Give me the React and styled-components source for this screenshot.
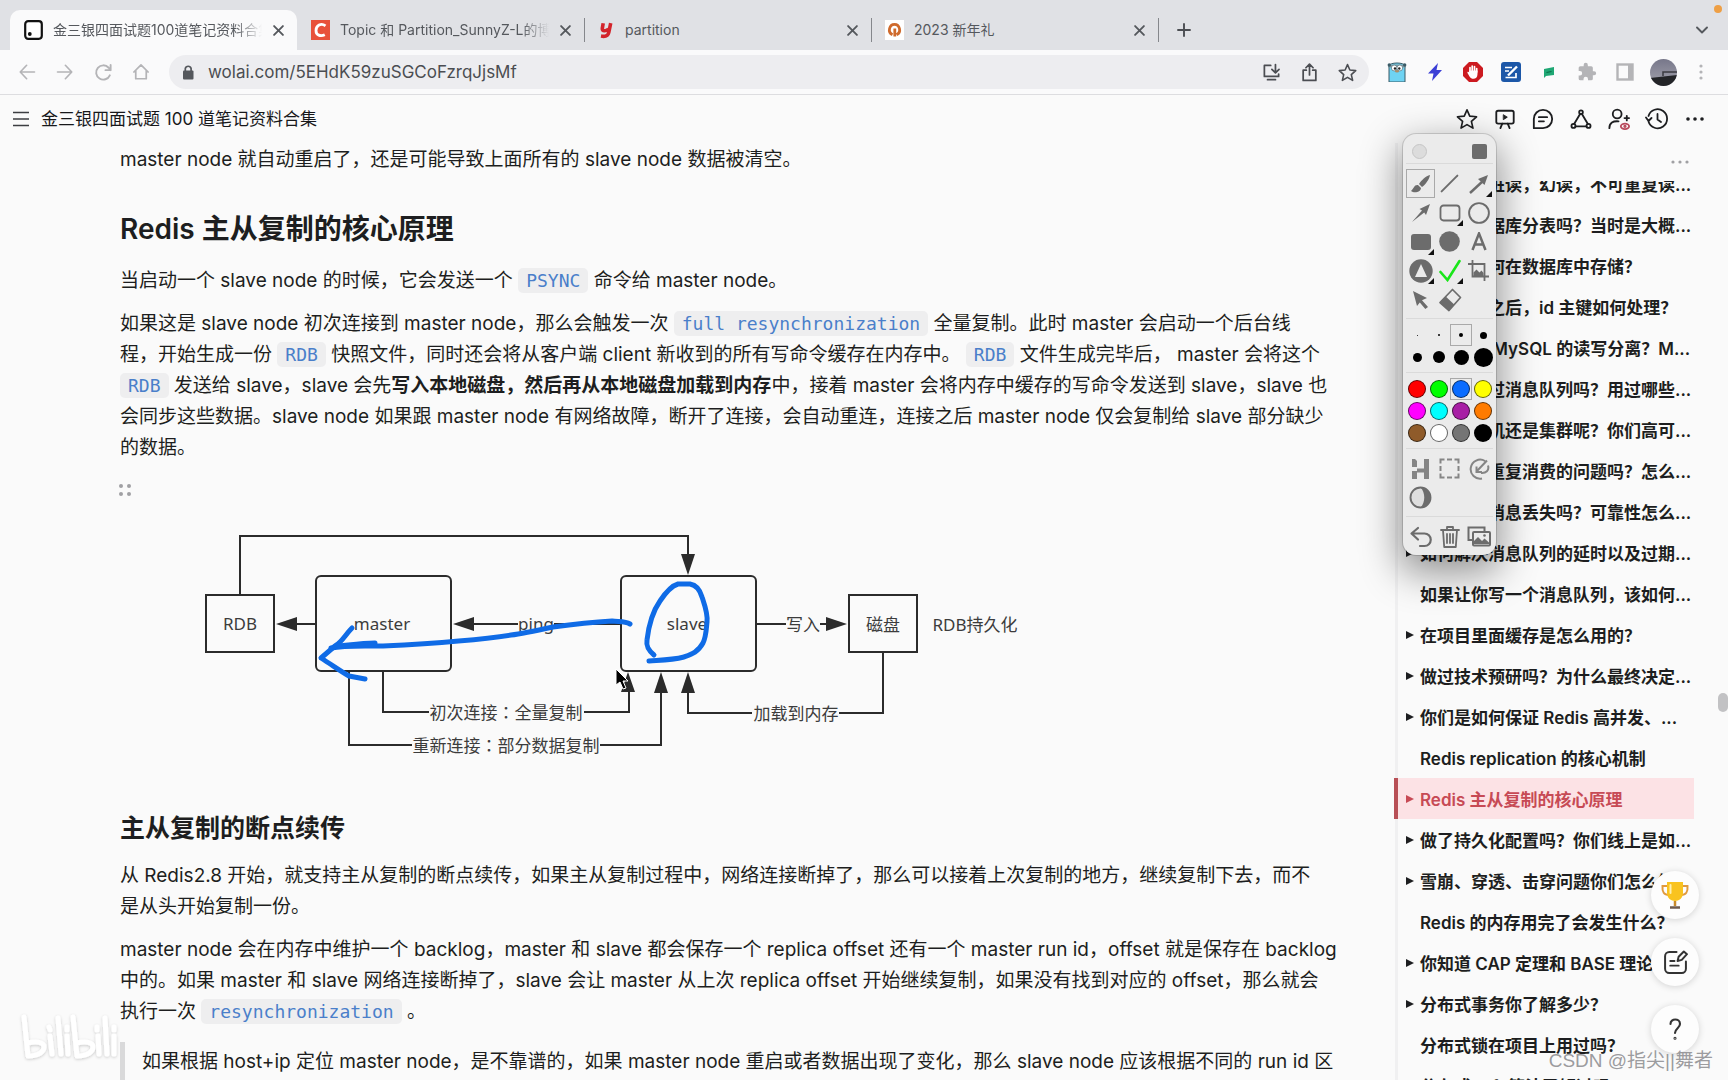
import React from "react";
import styled, { createGlobalStyle } from "styled-components";

const Global = createGlobalStyle`
  * { box-sizing: border-box; }
  body {
    margin: 0;
    background: #fafafa;
    color: #1d1e20;
    font-family: Inter, "Noto Sans CJK SC", sans-serif;
    overflow: hidden;
  }
  button, input { font: inherit; color: inherit; }
  svg { display: block; flex: none; }
`;

const Window = styled.div`
  display: flex;
  flex-direction: column;
  height: 100vh;
  overflow: hidden;
  position: relative;
`;

const PlainButton = styled.button`
  display: flex;
  align-items: center;
  justify-content: center;
  flex: none;
  padding: 0;
  border: 0;
  background: none;
`;

const IconButton = styled(PlainButton)`
  width: 38px;
  height: 32px;
  color: ${(p) => p.$color || "#4b4d52"};
`;

/* ---------- browser tabs ---------- */

const TabStrip = styled.header`
  display: flex;
  align-items: flex-end;
  flex: none;
  height: 50px;
  padding-left: 10px;
  background: #e0e1e5;
  position: relative;
`;

const Tab = styled.div`
  display: flex;
  align-items: center;
  width: 287px;
  height: 40px;
  padding: 0 9px 0 14px;
  gap: 10px;
  border-radius: 10px 10px 0 0;
  background: ${(p) => (p.$active ? "#fafafb" : "transparent")};
  color: #55585d;
  font-size: 14px;
`;

const TabDivider = styled.span`
  width: 1px;
  height: 24px;
  margin: 0 -1px 8px 0;
  background: #85878c;
`;

const TabTitle = styled.span`
  flex: 1;
  min-width: 0;
  overflow: hidden;
  white-space: nowrap;
  line-height: 20px;
  mask-image: ${(p) => (p.$fade ? "linear-gradient(90deg, #000 87%, transparent)" : "none")};
`;

const TabClose = styled(PlainButton)`
  width: 20px;
  height: 20px;
  margin-left: -4px;
`;

const NewTab = styled(PlainButton)`
  width: 52px;
  height: 40px;
  color: #4b4d52;
`;

const TabMenu = styled(PlainButton)`
  width: 32px;
  height: 40px;
  margin: 0 10px 0 auto;
  color: #55585d;
`;

const RecordingDot = styled.i`
  position: absolute;
  top: 5px;
  right: 6px;
  width: 8px;
  height: 8px;
  border-radius: 50%;
  background: #ee9f45;
`;

/* ---------- browser toolbar ---------- */

const Toolbar = styled.nav`
  display: flex;
  align-items: center;
  flex: none;
  height: 45px;
  padding: 0 8px;
  background: #fafafb;
  border-bottom: 1px solid #dddde0;
`;

const AddressBar = styled.label`
  display: flex;
  align-items: center;
  flex: 1;
  height: 34px;
  margin: 0 9px;
  padding: 0 3px 0 12px;
  border-radius: 17px;
  background: #ededf0;
  color: #55585d;
`;

const AddressInput = styled.input`
  flex: 1;
  min-width: 0;
  margin-left: 13px;
  padding: 0;
  border: 0;
  outline: 0;
  background: none;
  color: #4b4d52;
  font-size: 17px;
`;

/* ---------- page header ---------- */

const PageHeader = styled.div`
  display: flex;
  align-items: center;
  flex: none;
  height: 48px;
  padding: 0 14px 0 12px;
`;

const PageTitle = styled.h1`
  flex: 1;
  margin: 0 0 0 11px;
  font-size: 17px;
  line-height: 24px;
  font-weight: 400;
  color: #17181a;
`;

/* ---------- article ---------- */

const Body = styled.main`
  display: flex;
  flex: 1;
  min-height: 0;
`;

const Article = styled.article`
  flex: 1;
  min-width: 0;
  overflow: hidden;
  padding: 1px 0 0 120px;
  font-size: 19px;
  line-height: 31px;
  white-space: nowrap;
`;

const Paragraph = styled.p`
  margin: 0 0 12px;
`;

const Heading = styled.h2`
  margin: 34px 0 16px;
  font-size: 28px;
  line-height: 40px;
  font-weight: 600;
`;

const SubHeading = styled.h3`
  margin: 22px 0 14px;
  font-size: 25px;
  line-height: 36px;
  font-weight: 600;
`;

const Code = styled.code`
  padding: 2px 8px;
  border-radius: 5px;
  background: #eeeeef;
  color: #4a7fca;
  font-family: "DejaVu Sans Mono", monospace;
  font-size: 18px;
  line-height: 22px;
`;

const Quote = styled.blockquote`
  margin: 15px 0 0;
  padding: 4px 0 40px 17px;
  border-left: 5px solid #d9d9da;
`;

const Figure = styled.figure`
  margin: 19px 0 0;
`;

const DragHandle = styled(PlainButton)`
  width: 16px;
  height: 16px;
  margin-left: -3px;
  color: #a0a0a3;
`;

/* ---------- outline ---------- */

const Outline = styled.aside`
  display: flex;
  flex-direction: column;
  flex: none;
  width: 334px;
  padding-right: 34px;
`;

const OutlineTop = styled.div`
  display: flex;
  justify-content: flex-end;
  align-items: center;
  flex: none;
  height: 38px;
  padding-right: 4px;
  border-left: 3px solid #f0f0f1;
  margin-left: 1px;
`;

const OutlineList = styled.ul`
  flex: 1;
  min-height: 0;
  margin: 0;
  padding: 0;
  overflow: hidden;
  list-style: none;
  display: flex;
  flex-direction: column;
  &::before { content: ""; flex: none; margin-top: -18px; }
`;

const OutlineItem = styled.li`
  flex: none;
  height: 41px;
  padding-left: ${(p) => (p.$active ? 0 : 1)}px;
`;

const OutlineLink = styled.a`
  display: flex;
  align-items: center;
  height: 100%;
  padding-left: 8px;
  border-left: ${(p) => (p.$active ? "4px solid #b84f56" : "3px solid #f0f0f1")};
  background: ${(p) => (p.$active ? "#fce2e5" : "none")};
  color: ${(p) => (p.$active ? "#c74a55" : "#1d1e20")};
  font-size: 17px;
  font-weight: 600;
  white-space: nowrap;
  text-decoration: none;
`;

const Caret = styled.i`
  flex: none;
  width: 14px;
  height: 8px;
  &::before {
    content: "";
    display: ${(p) => (p.$open ? "block" : "none")};
    width: 0;
    border-left: 8px solid currentColor;
    border-top: 4px solid transparent;
    border-bottom: 4px solid transparent;
  }
`;

/* ---------- floating drawing palette ---------- */

const Palette = styled.section`
  position: absolute;
  top: 134px;
  right: 232px;
  width: 93px;
  border-radius: 13px;
  background: #ebebeb;
  box-shadow: 0 0 0 1px rgba(0, 0, 0, 0.14), 0 14px 38px 4px rgba(0, 0, 0, 0.42);
  padding: 0 3px;
  color: #6c6c6c;
`;

const PaletteHead = styled.div`
  display: flex;
  justify-content: space-between;
  align-items: center;
  height: 30px;
  padding: 5px 6px 0;
  border-bottom: 1px solid #dadada;
`;

const CloseDot = styled(PlainButton)`
  width: 15px;
  height: 15px;
  border: 1px solid #c6c6c6;
  border-radius: 50%;
  background: #dcdcdc;
`;

const CollapseSquare = styled(PlainButton)`
  width: 15px;
  height: 15px;
  border-radius: 2px;
  background: #6c6c6c;
`;

const PaletteGrid = styled.div`
  display: grid;
  grid-template-columns: repeat(${(p) => p.$cols}, ${(p) => (p.$cols === 3 ? 29 : 22)}px);
  grid-auto-rows: ${(p) => (p.$cols === 3 ? 29 : 22)}px;
  padding: 5px 0 4px;
  border-bottom: ${(p) => (p.$last ? "0" : "1px solid #dadada")};
`;

const Tool = styled(PlainButton)`
  position: relative;
  border: 1px solid ${(p) => (p.$on ? "#a9a9a9" : "transparent")};
  &::after {
    content: "";
    display: ${(p) => (p.$more ? "block" : "none")};
    position: absolute;
    right: 0;
    bottom: 0;
    border-bottom: 6px solid #111;
    border-left: 6px solid transparent;
  }
`;

const Dot = styled.i`
  flex: none;
  width: ${(p) => p.$size}px;
  height: ${(p) => p.$size}px;
  border-radius: 50%;
  background: ${(p) => p.$color || "#000"};
  border: ${(p) => (p.$color ? "1px solid rgba(0, 0, 0, 0.6)" : "0")};
`;

/* ---------- overlays ---------- */

const FloatingActions = styled.div`
  position: absolute;
  right: 29px;
  bottom: 27px;
  display: flex;
  flex-direction: column;
  gap: 19px;
`;

const RoundButton = styled(PlainButton)`
  width: 48px;
  height: 48px;
  border-radius: 50%;
  background: #fdfdfd;
  color: #333;
  box-shadow: 0 1px 7px rgba(0, 0, 0, 0.16);
`;

const ScrollThumb = styled.i`
  position: absolute;
  top: 693px;
  right: 0;
  width: 10px;
  height: 19px;
  border-radius: 5px;
  background: #c2c2c4;
`;

const Credit = styled.span`
  position: absolute;
  right: 15px;
  bottom: 6px;
  font-family: "Liberation Sans", "Noto Sans CJK SC", sans-serif;
  font-size: 19px;
  line-height: 26px;
  color: rgba(130, 130, 134, 0.8);
`;

const VideoMark = styled.span`
  position: absolute;
  left: 16px;
  bottom: 12px;
`;

/* ---------- drawings ---------- */

const Line = ({ size = 20, w = 2, box = 24, children }) => (
  <svg width={size} height={size} viewBox={`0 0 ${box} ${box}`} fill="none" stroke="currentColor" strokeWidth={w} strokeLinecap="round" strokeLinejoin="round">
    {children}
  </svg>
);

const CrossIcon = () => (
  <Line size={11} box={10} w={1.7}><path d="M1 1l8 8M9 1L1 9" /></Line>
);
const STAR = "M12 2l3 6.900 7.400.700-5.600 5 1.700 7.400L12 18.100 5.500 22l1.700-7.400-5.600-5 7.400-.700z";

const WolaiIcon = () => (
  <svg width="19" height="20" viewBox="0 0 19 20">
    <rect x="1.200" y="1.200" width="16.600" height="17.600" rx="3" fill="#fff" stroke="#111" strokeWidth="2.200" />
    <circle cx="5.800" cy="14" r="1.900" fill="#111" />
  </svg>
);
const CsdnIcon = () => (
  <svg width="19" height="20" viewBox="0 0 19 20">
    <rect width="19" height="20" fill="#e8513a" />
    <path d="M14.500 5.800C10 2.500 5 5.500 5 10.400c0 4.800 4.500 6.400 8.800 4.300" fill="none" stroke="#fff" strokeWidth="2.800" />
  </svg>
);
const YoudaoIcon = () => (
  <svg width="17" height="20" viewBox="0 0 17 20">
    <path d="M5.200 3.200L4.300 8.500C4 11.500 8 11.500 10.500 9M12.700 3.200l-1.900 9.300c-.7 3.300-3.300 4.400-7.800 3.600" fill="none" stroke="#d3242b" strokeWidth="3.600" />
  </svg>
);
const GiftSiteIcon = () => (
  <svg width="19" height="20" viewBox="0 0 19 20">
    <rect width="19" height="20" fill="#fff" />
    <path d="M7.500 14.800C2 12 4.500 4.300 9.500 4.300S17 12 11.600 14.800M9.800 8.500v8" fill="none" stroke="#cf6a2c" strokeWidth="2.800" />
  </svg>
);

const GopherIcon = () => (
  <svg width="20" height="20" viewBox="0 0 20 20">
    <path d="M2 20V4C2 0 18 0 18 4v16z" fill="#6fd3f3" stroke="#3a5a66" strokeWidth="1" />
    <path d="M1 2.500h18v3H1z" fill="#7d9aa3" />
    <circle cx="2.300" cy="3" r="1.700" fill="#3a5a66" /><circle cx="17.700" cy="3" r="1.700" fill="#3a5a66" />
    <circle cx="7.200" cy="6" r="2.900" fill="#fff" stroke="#3a5a66" strokeWidth=".6" />
    <circle cx="12.800" cy="6" r="2.900" fill="#fff" stroke="#3a5a66" strokeWidth=".6" />
    <circle cx="8" cy="6.500" r="1.200" fill="#222" /><circle cx="12.300" cy="6.500" r="1.200" fill="#222" />
    <ellipse cx="10" cy="9.300" rx="2" ry="1.300" fill="#ad8c66" />
  </svg>
);
const BoltIcon = () => (
  <svg width="16" height="20" viewBox="0 0 16 20"><path d="M11 1L1 11.500h5.500L5 19 15 8H9.500z" fill="#3b3fd6" /></svg>
);
const HandIcon = () => (
  <svg width="20" height="20" viewBox="0 0 20 20">
    <path d="M6 0h8l6 6v8l-6 6H6l-6-6V6z" fill="#cc1a20" />
    <path d="M7 9.500V5.500M9.200 9V4M11.500 9V4.500M13.700 10V6.500" stroke="#fff" strokeWidth="1.700" strokeLinecap="round" />
    <path d="M6.200 8.500h8.300V12c0 6-6 6-8 2.500L4.500 11c-.5-1.300 1-1.600 1.700-.6z" fill="#fff" />
  </svg>
);
const NoteIcon = () => (
  <svg width="20" height="20" viewBox="0 0 20 20">
    <rect width="20" height="20" rx="3" fill="#1c57a8" />
    <path d="M4 5.500h7M4 9h4M4.500 15.500H15V11" stroke="#fff" strokeWidth="1.700" fill="none" />
    <path d="M7 13.500L16 4.500" stroke="#fff" strokeWidth="2.400" />
  </svg>
);
const GreenIcon = () => (
  <svg width="12" height="13" viewBox="0 0 12 13"><path d="M1 3l10-2v8L3 10l-2 2z" fill="#1fa774" /><path d="M3.500 6.500l5-1" stroke="#0c6d48" strokeWidth="1.200" /></svg>
);
const PuzzleIcon = () => (
  <svg width="20" height="20" viewBox="0 0 24 24"><path fill="#b4b4b7" d="M20.500 11H19V7a2 2 0 0 0-2-2h-4V3.500a2.500 2.500 0 0 0-5 0V5H4a2 2 0 0 0-2 2v3.800h1.500a2.700 2.700 0 0 1 0 5.400H2V20a2 2 0 0 0 2 2h3.800v-1.500a2.700 2.700 0 0 1 5.400 0V22H17a2 2 0 0 0 2-2v-4h1.500a2.500 2.500 0 0 0 0-5z" /></svg>
);
const PanelIcon = () => (
  <svg width="18" height="18" viewBox="0 0 18 18"><rect x="1.500" y="1.500" width="15" height="15" fill="none" stroke="#b4b4b7" strokeWidth="2.400" /><path d="M12 1h5v16h-5z" fill="#b4b4b7" /></svg>
);
const Avatar = () => (
  <svg width="27" height="27" viewBox="0 0 27 27">
    <defs>
      <clipPath id="round"><circle cx="13.500" cy="13.500" r="13.500" /></clipPath>
      <linearGradient id="sky" x1="0" x2="0" y1="0" y2="1"><stop offset="0" stopColor="#77778a" /><stop offset="1" stopColor="#a4a3ae" /></linearGradient>
    </defs>
    <g clipPath="url(#round)">
      <rect width="27" height="27" fill="url(#sky)" />
      <path d="M0 19l27-3v11H0z" fill="#232428" />
      <path d="M13 17v-4h14" fill="none" stroke="#3a3a40" strokeWidth="1.500" />
    </g>
  </svg>
);
const Kebab = ({ color }) => (
  <svg width="4" height="18" viewBox="0 0 4 18" fill={color}><circle cx="2" cy="3" r="1.600" /><circle cx="2" cy="9" r="1.600" /><circle cx="2" cy="15" r="1.600" /></svg>
);
const Ellipsis = ({ r, gap, color }) => (
  <svg width={gap * 2 + 6} height="8" viewBox={`0 0 ${gap * 2 + 6} 8`} fill={color}>
    {[0, 1, 2].map((i) => <circle key={i} cx={3 + gap * i} cy="4" r={r} />)}
  </svg>
);

/* ---------- replication diagram ---------- */

const DiagramText = styled.text`
  font-family: "Noto Sans", "Noto Sans CJK SC", sans-serif;
  font-size: 17px;
  fill: #3c3c3c;
  text-anchor: middle;
`;

const Colon = styled.tspan`
  font-family: "Noto Sans CJK TC", sans-serif;
`;

const Diagram = () => (
  <svg width="960" height="290" viewBox="120 498 960 290" role="img" aria-label="Redis 主从复制">
    <g fill="none" stroke="#2b2b2b" strokeWidth="2">
      <rect x="206" y="595" width="68" height="57" />
      <rect x="316" y="576" width="135" height="95" rx="5" />
      <rect x="621" y="576" width="135" height="95" rx="5" />
      <rect x="849" y="595" width="68" height="57" />
      <path d="M240 595V536H688V556M316 624H295M518 624H472M554 624H621M756 624H786M820 624H828" />
      <path d="M383 671V712H429M584 712H629V690M349 671V745H412M600 745H661V690M883 652V713H839M752 713H688V690" />
    </g>
    <g fill="#2b2b2b">
      <path d="M688 575l-7-21h14zM276 624l21-7v14zM453 624l21-7v14zM847 624l-21-7v14z" />
      <path d="M628 672l-7 20h14zM661 672l-7 21h14zM688 672l-7 21h14z" />
    </g>
    <DiagramText x="240" y="630">RDB</DiagramText>
    <DiagramText x="382" y="630">master</DiagramText>
    <DiagramText x="536" y="630">ping</DiagramText>
    <DiagramText x="687" y="630">slave</DiagramText>
    <DiagramText x="803" y="631">写入</DiagramText>
    <DiagramText x="883" y="631">磁盘</DiagramText>
    <DiagramText x="975" y="631">RDB持久化</DiagramText>
    <DiagramText x="506" y="719">初次连接<Colon>：</Colon>全量复制</DiagramText>
    <DiagramText x="506" y="752">重新连接<Colon>：</Colon>部分数据复制</DiagramText>
    <DiagramText x="796" y="720">加载到内存</DiagramText>
    <g fill="none" stroke="#0f6be6" strokeWidth="5" strokeLinecap="round" strokeLinejoin="round">
      <path d="M630 624C625 621 618 622 612 621C595 622 575 624 553 627C535 631 520 634 511 635C480 640 440 643 383 646C365 646 345 645 331 648M375 643C362 643 350 645 340 646" />
      <path d="M352 628C345 635 342 642 335 646L321 658C332 665 342 672 349 676L365 679" />
      <path d="M654 655C648 650 646 646 647 640C649 623 653 611 660 601C666 592 671 586 678 584L690 584C696 585 700 590 702 597C705 606 708 614 707 622C706 632 706 637 703 643C698 652 692 654 684 657C672 660 664 660 649 661" />
    </g>
    <path d="M616 669v16l4-3 3 7 3-1-3-7h5z" fill="#000" stroke="#fff" strokeWidth="1" />
  </svg>
);

/* ---------- data ---------- */

const tabs = [
  { icon: <WolaiIcon />, title: "金三银四面试题100道笔记资料合集", active: true, fade: true },
  { icon: <CsdnIcon />, title: "Topic 和 Partition_SunnyZ-L的博客", fade: true },
  { icon: <YoudaoIcon />, title: "partition" },
  { icon: <GiftSiteIcon />, title: "2023 新年礼" },
];

const outline = [
  ["数据库的脏读，幻读，不可重复读...", 1],
  ["你们有数据库分表吗？当时是大概...", 1],
  ["金额应如何在数据库中存储？", 0],
  ["分库分表之后，id 主键如何处理？", 0],
  ["如何实现 MySQL 的读写分离？M...", 1],
  ["你们使用过消息队列吗？用过哪些...", 1],
  ["你们是单机还是集群呢？你们高可...", 1],
  ["有遇到过重复消费的问题吗？怎么...", 1],
  ["有处理过消息丢失吗？可靠性怎么...", 1],
  ["如何解决消息队列的延时以及过期...", 1],
  ["如果让你写一个消息队列，该如何...", 0],
  ["在项目里面缓存是怎么用的？", 1],
  ["做过技术预研吗？为什么最终决定...", 1],
  ["你们是如何保证 Redis 高并发、...", 1],
  ["Redis replication 的核心机制", 0],
  ["Redis 主从复制的核心原理", 1, true],
  ["做了持久化配置吗？你们线上是如...", 1],
  ["雪崩、穿透、击穿问题你们怎么解...", 1],
  ["Redis 的内存用完了会发生什么？", 0],
  ["你知道 CAP 定理和 BASE 理论吗？", 1],
  ["分布式事务你了解多少？", 1],
  ["分布式锁在项目上用过吗？", 0],
  ["分布式 raft 算法了解过吗？", 0],
];

const tools = [
  { name: "brush", on: true, art: <svg width="21" height="20" viewBox="0 0 21 20" fill="currentColor"><path d="M20 1c-4 1-9 5.500-11 9l3 3c3.500-2.500 7.500-8 8-12zM8 11c-4-.5-4 3.500-7 6 3 2.500 9.500 1.500 10-3z" /></svg> },
  { name: "line", art: <Line size={21} w={2.3}><path d="M3 21L21 3" /></Line> },
  { name: "arrow", more: true, art: <svg width="22" height="20" viewBox="0 0 22 20"><path d="M2 19L15 7" stroke="currentColor" strokeWidth="2.400" /><path d="M20 1l-3.500 10L10 5z" fill="currentColor" /></svg> },
  { name: "tapered arrow", art: <svg width="20" height="20" viewBox="0 0 20 20" fill="currentColor"><path d="M1 19L11 7.500 8.500 6 19 1l-4 11-1.800-2.500z" /></svg> },
  { name: "rectangle", more: true, art: <svg width="22" height="18" viewBox="0 0 22 18"><rect x="1.500" y="1.500" width="19" height="15" rx="3" fill="none" stroke="currentColor" strokeWidth="1.800" /></svg> },
  { name: "ellipse", art: <svg width="22" height="22" viewBox="0 0 22 22"><circle cx="11" cy="11" r="9.900" fill="none" stroke="currentColor" strokeWidth="1.900" /></svg> },
  { name: "filled rectangle", more: true, art: <svg width="20" height="16" viewBox="0 0 20 16"><rect width="20" height="16" rx="3" fill="currentColor" /></svg> },
  { name: "filled ellipse", art: <svg width="21" height="21" viewBox="0 0 21 21"><circle cx="10.500" cy="10.500" r="10.300" fill="currentColor" /></svg> },
  { name: "text", art: <svg width="16" height="19" viewBox="0 0 16 19"><path d="M1.500 18L8 1.500 14.500 18M4 12.500h8" fill="none" stroke="currentColor" strokeWidth="2.500" /></svg> },
  { name: "stamp", more: true, art: <svg width="24" height="24" viewBox="0 0 24 24"><circle cx="12" cy="12" r="11.700" fill="currentColor" /><path d="M12 5l6 13H6z" fill="#ebebeb" /></svg> },
  { name: "check", more: true, art: <svg width="22" height="23" viewBox="0 0 22 23"><path d="M1.500 13l7 8 12-19" fill="none" stroke="#19e619" strokeWidth="2.600" strokeLinecap="round" /></svg> },
  { name: "crop", art: <svg width="21" height="21" viewBox="0 0 21 21" fill="none" stroke="currentColor" strokeWidth="1.800"><path d="M0 4h16.500v17M4.500 0v16.500H21" /><path d="M5.500 16v-3.500l3-3 3 3 2-2 2 2.500v3z" fill="currentColor" stroke="none" /></svg> },
  { name: "select", art: <svg width="18" height="20" viewBox="0 0 18 20" fill="currentColor"><path d="M1 1l14 7-5 2.200 6 6.800-2.700 2-5.500-6.500L5 16z" /></svg> },
  { name: "eraser", art: <svg width="24" height="24" viewBox="0 0 24 24"><path d="M14.500 1.500l8 8-11.500 13-9-8z" fill="none" stroke="currentColor" strokeWidth="1.700" strokeLinejoin="round" /><path d="M7.700 8.500l8.500 8-5.200 6-9-8z" fill="currentColor" /></svg> },
];

const sizes = [1, 2, 4, 7, 9, 12, 15, 19];
const colors = ["#ff0000", "#00ff00", "#0a6cff", "#ffff00", "#ff00ff", "#00ffff", "#a81fa5", "#ff7b00", "#8f5b2a", "#ffffff", "#757575", "#000000"];

const utilities = [
  { name: "hide", art: <svg width="20" height="22" viewBox="0 0 20 22" fill="#858585"><path d="M1 1h3l2 2v6H1zM1 13h5v8H1zM6 10.500h7v4H6zM13 1h5v20h-5z" /></svg> },
  { name: "selection", art: <svg width="21" height="21" viewBox="0 0 21 21" fill="none" stroke="#858585" strokeWidth="2"><path d="M1.500 5.500v-4h4M8 1.500h5M15.500 1.500h4v4M19.500 8v5M19.500 15.500v4h-4M13 19.500H8M5.500 19.500h-4v-4M1.500 13V8" /></svg> },
  { name: "fade", art: <svg width="22" height="22" viewBox="0 0 22 22" fill="none" stroke="#858585" strokeWidth="2"><path d="M17 3A9.500 9.500 0 1 0 14 20.500M20 7.500c1.500 5-2 8-7 7.500M8 14L19 2.500M8.500 8.500V14H14" /></svg> },
  { name: "contrast", art: <svg width="23" height="23" viewBox="0 0 23 23"><circle cx="11.500" cy="11.500" r="10" fill="#dedede" stroke="currentColor" strokeWidth="1.900" /><path d="M11.500 1.500c5 5 5 15 0 20a10 10 0 0 0 0-20z" fill="currentColor" /></svg> },
];

const history = [
  { name: "undo", art: <Line size={24} w={2.2}><path d="M9 3L2.500 8.500 9 14.500M3 8.500h12.500a6 6 0 0 1 0 12.500H11" /></Line> },
  { name: "clear", art: <Line size={24} w={1.8}><path d="M3 5h18M9 4.500V2h6v2.500M5 5l1.200 17h11.600L19 5M9 9v9M12 9v9M15 9v9" /></Line> },
  { name: "gallery", art: <svg width="24" height="21" viewBox="0 0 24 21" fill="none" stroke="currentColor" strokeWidth="2"><path d="M5 14H1.500V1.500h16V5" /><rect x="6" y="6" width="17" height="13.500" rx="1" /><path d="M7 18v-3l4-4 4 4 2.500-2.500 4.500 4V18z" fill="currentColor" stroke="none" /><circle cx="17.500" cy="9.500" r="1.300" fill="currentColor" stroke="none" /></svg> },
];

const pageActions = [
  ["favorite", <Line size={22} w={1.8}><path d={STAR} /></Line>],
  ["present", <Line size={22} w={2}><rect x="2.500" y="3" width="19" height="14" rx="2" /><path d="M9 17l-2 5M15 17l2 5" /><path d="M10.500 7.500l4 2.500-4 2.500z" fill="currentColor" strokeWidth="1" /></Line>],
  ["comments", <Line size={22} w={2}><path d="M2 22V12A10 10 0 1 1 12 22zM7.500 10h9M7.500 14.500h5.500" /></Line>],
  ["graph", <Line size={22} w={2}><path d="M11 6.500L4.500 17.500M13 6.500l6.500 11M6 20h12" /><circle cx="12" cy="4.500" r="2" /><circle cx="3.800" cy="19.500" r="2.200" /><circle cx="20.200" cy="19.500" r="2.200" /></Line>],
  ["share with people", <Line size={22} w={2}><circle cx="10" cy="6.500" r="4.800" /><path d="M1.500 22c0-6 4-8 10-7.500M20.500 8.500v5M18 11h5" /><ellipse cx="18.500" cy="20" rx="4.500" ry="3" stroke="#b84a5c" /><circle cx="18.500" cy="20" r=".8" stroke="#b84a5c" /></Line>],
  ["history", <Line size={24} w={1.8}><path d="M3.500 14.500A9.500 9.500 0 1 0 3.500 9M1 10.500l2.500 3.500 3-3M12.500 7v5.500l3.500 2.500" /></Line>],
  ["more", <Ellipsis r={1.8} gap={7} color="#1d1e20" />],
];

const extensions = [
  ["gopher", <GopherIcon />],
  ["bolt", <BoltIcon />],
  ["blocker", <HandIcon />],
  ["notes", <NoteIcon />],
  ["translate", <GreenIcon />],
  ["extensions", <PuzzleIcon />],
  ["side panel", <PanelIcon />],
  ["profile", <Avatar />],
  ["menu", <Kebab color="#b4b4b7" />],
];

/* ---------- app ---------- */

export default function App() {
  return (
    <>
      <Global />
      <Window>
        <TabStrip>
          {tabs.map((t, i) => (
            <React.Fragment key={t.title}>
              <Tab $active={t.active}>
                {t.icon}
                <TabTitle $fade={t.fade}>{t.title}</TabTitle>
                <TabClose aria-label="close tab"><CrossIcon /></TabClose>
              </Tab>
              {i > 0 && <TabDivider />}
            </React.Fragment>
          ))}
          <NewTab aria-label="new tab"><Line size={14} box={14} w={1.9}><path d="M7 1v12M1 7h12" /></Line></NewTab>
          <TabMenu aria-label="search tabs"><Line size={12} box={12} w={1.9}><path d="M1 3.500l5 5 5-5" /></Line></TabMenu>
          <RecordingDot />
        </TabStrip>

        <Toolbar>
          <IconButton aria-label="back" $color="#b4b4b7"><Line size={18} w={2.2}><path d="M22 12H3M11.500 3L3 12l8.500 9" /></Line></IconButton>
          <IconButton aria-label="forward" $color="#b4b4b7"><Line size={18} w={2.2}><path d="M2 12h19M12.500 3l8.500 9-8.500 9" /></Line></IconButton>
          <IconButton aria-label="reload" $color="#b4b4b7"><Line size={19} w={2.4}><path d="M20 15.500A9 9 0 1 1 18.500 6L21 9M21 2.500V9h-6.500" /></Line></IconButton>
          <IconButton aria-label="home" $color="#b4b4b7"><Line size={18} w={2.3}><path d="M2.500 12L12 2.500l9.500 9.500M5 10v11h14V10" /></Line></IconButton>
          <AddressBar>
            <svg width="14" height="17" viewBox="0 0 14 17"><rect x="2" y="6.500" width="10.500" height="9" rx="1" fill="#55585d" /><path d="M4.300 7V4.500a3 3 0 0 1 5.800 0V7" fill="none" stroke="#55585d" strokeWidth="1.700" /></svg>
            <AddressInput aria-label="address" defaultValue="wolai.com/5EHdK59zuSGCoFzrqJjsMf" />
            <IconButton aria-label="install"><Line size={19} w={2.2}><path d="M11 3H3v14h18v-3M7 21h10M17 2v10M12.500 8l4.500 4.500L21.500 8" /></Line></IconButton>
            <IconButton aria-label="share"><Line size={19} w={2.2}><path d="M8 9H4v13h16V9h-4M12 15V2M7.500 6L12 1.500 16.500 6" /></Line></IconButton>
            <IconButton aria-label="bookmark"><Line size={19} w={2}><path d={STAR} /></Line></IconButton>
          </AddressBar>
          {extensions.map(([name, art]) => (
            <IconButton key={name} aria-label={name}>{art}</IconButton>
          ))}
        </Toolbar>

        <PageHeader>
          <PlainButton aria-label="toggle sidebar">
            <svg width="18" height="16" viewBox="0 0 18 16"><path d="M1 1.500h16M1 8h16M1 14.500h16" stroke="#3c3e42" strokeWidth="1.700" /></svg>
          </PlainButton>
          <PageTitle>金三银四面试题 100 道笔记资料合集</PageTitle>
          {pageActions.map(([name, art]) => (
            <IconButton key={name} aria-label={name} $color="#1d1e20">{art}</IconButton>
          ))}
        </PageHeader>

        <Body>
          <Article>
            <Paragraph>master node 就自动重启了，还是可能导致上面所有的 slave node 数据被清空。</Paragraph>
            <Heading>Redis 主从复制的核心原理</Heading>
            <Paragraph>当启动一个 slave node 的时候，它会发送一个 <Code>PSYNC</Code> 命令给 master node。</Paragraph>
            <Paragraph>
              如果这是 slave node 初次连接到 master node，那么会触发一次 <Code>full resynchronization</Code> 全量复制。此时 master 会启动一个后台线<br />
              程，开始生成一份 <Code>RDB</Code> 快照文件，同时还会将从客户端 client 新收到的所有写命令缓存在内存中。 <Code>RDB</Code> 文件生成完毕后， master 会将这个<br />
              <Code>RDB</Code> 发送给 slave，slave 会先<b>写入本地磁盘，然后再从本地磁盘加载到内存</b>中，接着 master 会将内存中缓存的写命令发送到 slave，slave 也<br />
              会同步这些数据。slave node 如果跟 master node 有网络故障，断开了连接，会自动重连，连接之后 master node 仅会复制给 slave 部分缺少<br />
              的数据。
            </Paragraph>
            <Figure>
              <DragHandle aria-label="drag block">
                <svg width="14" height="14" viewBox="0 0 14 14" fill="currentColor"><circle cx="3" cy="3" r="2" /><circle cx="11" cy="3" r="2" /><circle cx="3" cy="11" r="2" /><circle cx="11" cy="11" r="2" /></svg>
              </DragHandle>
              <Diagram />
            </Figure>
            <SubHeading>主从复制的断点续传</SubHeading>
            <Paragraph>
              从 Redis2.8 开始，就支持主从复制的断点续传，如果主从复制过程中，网络连接断掉了，那么可以接着上次复制的地方，继续复制下去，而不<br />
              是从头开始复制一份。
            </Paragraph>
            <Paragraph>
              master node 会在内存中维护一个 backlog，master 和 slave 都会保存一个 replica offset 还有一个 master run id，offset 就是保存在 backlog<br />
              中的。如果 master 和 slave 网络连接断掉了，slave 会让 master 从上次 replica offset 开始继续复制，如果没有找到对应的 offset，那么就会<br />
              执行一次 <Code>resynchronization</Code> 。
            </Paragraph>
            <Quote>如果根据 host+ip 定位 master node，是不靠谱的，如果 master node 重启或者数据出现了变化，那么 slave node 应该根据不同的 run id 区</Quote>
          </Article>

          <Outline>
            <OutlineTop>
              <PlainButton aria-label="outline options"><Ellipsis r={1.6} gap={7} color="#a0a0a3" /></PlainButton>
            </OutlineTop>
            <OutlineList>
              {outline.map(([text, open, active]) => (
                <OutlineItem key={text} $active={active}>
                  <OutlineLink href="#" $active={active}><Caret $open={open} />{text}</OutlineLink>
                </OutlineItem>
              ))}
            </OutlineList>
          </Outline>
        </Body>

        <Palette aria-label="drawing tools">
          <PaletteHead><CloseDot aria-label="close" /><CollapseSquare aria-label="collapse" /></PaletteHead>
          <PaletteGrid $cols={3}>
            {tools.map((t) => <Tool key={t.name} aria-label={t.name} $on={t.on} $more={t.more}>{t.art}</Tool>)}
          </PaletteGrid>
          <PaletteGrid $cols={4}>
            {sizes.map((s) => <Tool key={s} aria-label={`size ${s}`} $on={s === 4}><Dot $size={s} /></Tool>)}
          </PaletteGrid>
          <PaletteGrid $cols={4}>
            {colors.map((c, i) => <Tool key={c} aria-label={`color ${c}`} $on={i === 2}><Dot $size={18} $color={c} /></Tool>)}
          </PaletteGrid>
          <PaletteGrid $cols={3}>
            {utilities.map((t) => <Tool key={t.name} aria-label={t.name}>{t.art}</Tool>)}
          </PaletteGrid>
          <PaletteGrid $cols={3} $last>
            {history.map((t) => <Tool key={t.name} aria-label={t.name}>{t.art}</Tool>)}
          </PaletteGrid>
        </Palette>

        <FloatingActions>
          <RoundButton aria-label="rewards">
            <svg width="30" height="30" viewBox="0 0 30 30">
              <path d="M8 6H2.500c-.5 6 1.500 9 6.500 9M22 6h5.500c.5 6-1.500 9-6.500 9" fill="none" stroke="#e09a3e" strokeWidth="2" />
              <path d="M7 2h16v11c0 5-4 8-8 8s-8-3-8-8z" fill="#f9c31f" />
              <path d="M10.500 5v8" stroke="#fff0b0" strokeWidth="2" strokeLinecap="round" />
              <path d="M15 21v5" stroke="#c98a2a" strokeWidth="2.500" /><path d="M10 27.500h10" stroke="#6e5a4c" strokeWidth="2.500" />
            </svg>
          </RoundButton>
          <RoundButton aria-label="feedback">
            <Line size={25} w={1.9}><path d="M13 2H6a4 4 0 0 0-4 4v12a4 4 0 0 0 4 4h12a4 4 0 0 0 4-4v-7M7 10.500h4M7 15h8M14 10.500l1-4L20 1.500l3 2.500-5 5.500z" /></Line>
          </RoundButton>
          <RoundButton aria-label="help">
            <Line size={24} w={2.1}><path d="M7.500 7c0-6 9.500-6 9.500 0 0 4-5 4.500-5 9" /><circle cx="12" cy="21.300" r=".5" /></Line>
          </RoundButton>
        </FloatingActions>

        <ScrollThumb />
        <VideoMark>
          <svg width="106" height="56" viewBox="0 0 106 56" role="img" aria-label="bilibili">
            <defs><filter id="soft" x="-20%" y="-20%" width="140%" height="150%"><feDropShadow dx="0" dy="1" stdDeviation="1.500" floodColor="#000" floodOpacity=".2" /></filter></defs>
            <g filter="url(#soft)" fill="none" stroke="#fff" strokeWidth="5" strokeLinecap="round" strokeLinejoin="round">
              <path d="M8 5l4 39c12 0 16-5 16-9 0-5-8-6-16-4M34 24l2 18M42 6l3 36M51 24l1 18M33 15l1 3M51 15v3" />
              <path d="M57 5l4 39c12 0 16-5 16-9 0-5-8-6-16-4M82 24l1 18M89 6l2 36M98 24v18M81 15v3M98 15v3" />
            </g>
          </svg>
        </VideoMark>
        <Credit>CSDN @指尖||舞者</Credit>
      </Window>
    </>
  );
}
